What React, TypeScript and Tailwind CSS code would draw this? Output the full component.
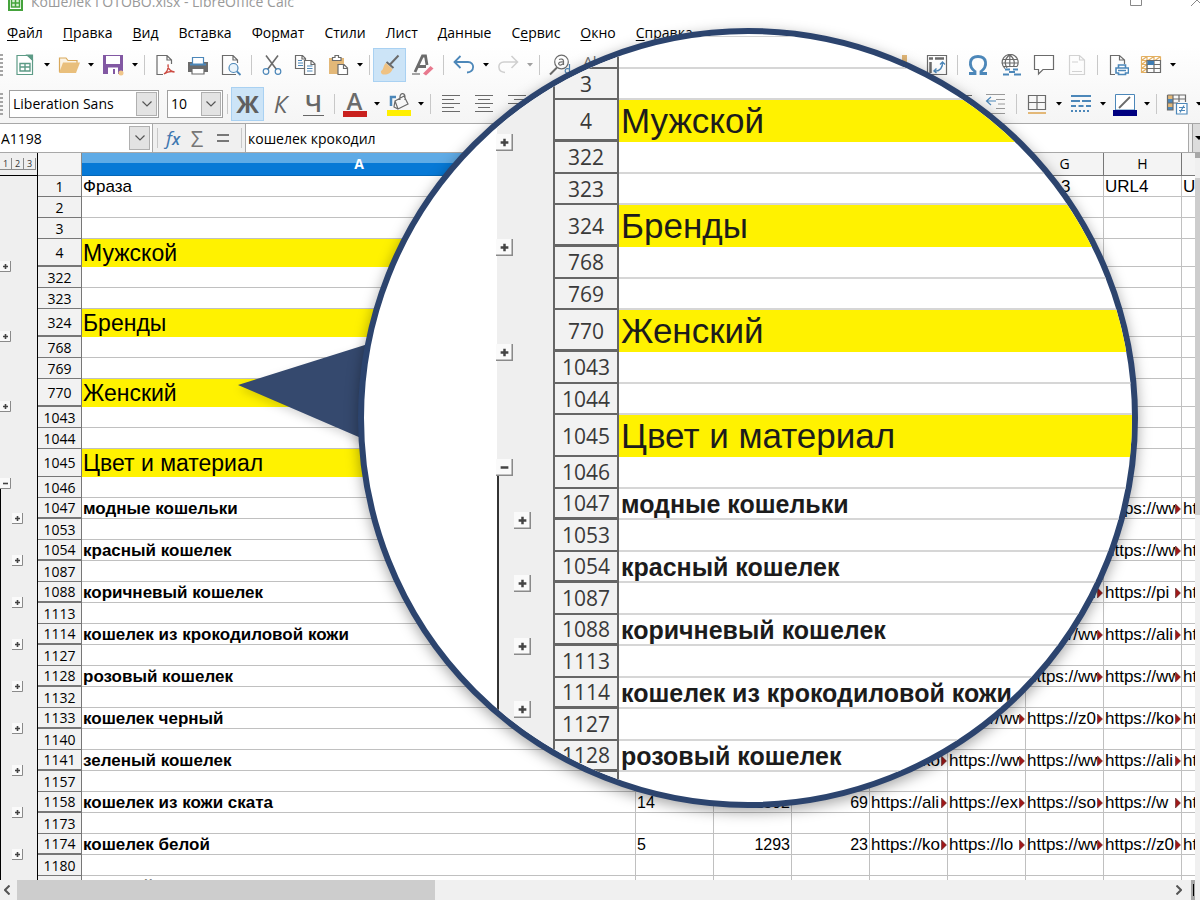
import type { ReactNode } from "react";

interface Row {
    n: string;
    title?: string;
    kind?: "group" | "bold" | "plain";
    outline?: "plus1" | "plus2" | "minus";
    thick?: boolean;
    inner?: boolean;
    cells?: string[];
}

const rows: Row[] = [
    { n: "1", title: "Фраза", kind: "plain", cells: ["", "", "", "URL1", "URL2", "URL3", "URL4", "URL5"] },
    { n: "2" },
    { n: "3" },
    { n: "4", title: "Мужской", kind: "group", thick: true },
    { n: "322", outline: "plus1" },
    { n: "323" },
    { n: "324", title: "Бренды", kind: "group", thick: true },
    { n: "768", outline: "plus1" },
    { n: "769" },
    { n: "770", title: "Женский", kind: "group", thick: true },
    { n: "1043", outline: "plus1" },
    { n: "1044" },
    { n: "1045", title: "Цвет и материал", kind: "group" },
    { n: "1046", outline: "minus" },
    { n: "1047", title: "модные кошельки", kind: "bold", thick: true, inner: true, cells: ["", "", "", "", "", "", "https://ww", "https://"] },
    { n: "1053", outline: "plus2", inner: true },
    { n: "1054", title: "красный кошелек", kind: "bold", thick: true, inner: true, cells: ["", "", "", "", "", "", "https://ww", "https://"] },
    { n: "1087", outline: "plus2", inner: true },
    { n: "1088", title: "коричневый кошелек", kind: "bold", thick: true, inner: true, cells: ["", "", "", "", "", "https://ww", "https://pi", "https://"] },
    { n: "1113", outline: "plus2", inner: true },
    { n: "1114", title: "кошелек из крокодиловой кожи", kind: "bold", thick: true, inner: true, cells: ["", "", "", "", "", "https://ww", "https://ali", "https://"] },
    { n: "1127", outline: "plus2", inner: true },
    { n: "1128", title: "розовый кошелек", kind: "bold", thick: true, inner: true, cells: ["", "", "", "", "", "https://ww", "https://ww", "https://"] },
    { n: "1132", outline: "plus2", inner: true },
    { n: "1133", title: "кошелек черный", kind: "bold", thick: true, inner: true, cells: ["", "", "", "", "https://ww", "https://z0", "https://ko", "https://"] },
    { n: "1140", outline: "plus2", inner: true },
    { n: "1141", title: "зеленый кошелек", kind: "bold", thick: true, inner: true, cells: ["", "", "", "https://ko", "https://ww", "https://ww", "https://ali", "https://"] },
    { n: "1157", outline: "plus2", inner: true },
    { n: "1158", title: "кошелек из кожи ската", kind: "bold", thick: true, inner: true, cells: ["14", "1392", "69", "https://ali", "https://ex", "https://so", "https://w", "https://"] },
    { n: "1173", outline: "plus2", inner: true },
    { n: "1174", title: "кошелек белой", kind: "bold", thick: true, inner: true, cells: ["5", "1293", "23", "https://ko", "https://lo", "https://ww", "https://z0", "https://"] },
    { n: "1180", outline: "plus2", inner: true },
    { n: "1181", title: "женский кошелек", kind: "bold", inner: true },
];

const columns = ["B", "C", "D", "E", "F", "G", "H", "I"];

// [before, underlined letter, after]
const menu = [
    ["", "Ф", "айл"],
    ["", "П", "равка"],
    ["", "В", "ид"],
    ["Вст", "а", "вка"],
    ["Фо", "р", "мат"],
    ["Стили", "", ""],
    ["Лист", "", ""],
    ["", "Д", "анные"],
    ["С", "е", "рвис"],
    ["", "О", "кно"],
    ["", "С", "правка"],
];

function Svg({ children }: { children: ReactNode }) {
    return (
        <svg width="22" height="22" viewBox="0 0 22 22" fill="none" stroke="#6b6b6b" strokeWidth="1.2">
            {children}
        </svg>
    );
}

function Tool({ label, active, children }: { label: string; active?: boolean; children: ReactNode }) {
    return (
        <button
            aria-label={label}
            className={`flex h-[34px] w-[33px] shrink-0 items-center justify-center ${active ? "border border-[#a9d1f2] bg-[#cce4f7]" : ""}`}
        >
            {children}
        </button>
    );
}

function Arrow({ muted }: { muted?: boolean }) {
    return (
        <button aria-label="Ещё" className="flex h-8 w-[11px] shrink-0 items-center justify-center">
            <svg width="6" height="4" viewBox="0 0 6 4">
                <path d="M0 0H6L3 3.5Z" fill={muted ? "#a0a0a0" : "#000"} />
            </svg>
        </button>
    );
}

function Sep() {
    return (
        <div className="flex h-5 w-2 shrink-0 justify-center">
            <div className="w-px bg-[#c8c8c8]" />
        </div>
    );
}

function Grip() {
    return (
        <div className="flex w-2 shrink-0 flex-col gap-0.5">
            {[0, 1, 2, 3, 4, 5].map((i) => (
                <div key={i} className="h-0.5 w-[3px] bg-[#a5a5a5]" />
            ))}
        </div>
    );
}

function Chevron() {
    return (
        <svg width="10" height="6" viewBox="0 0 10 6" fill="none" stroke="#555" strokeWidth="1.2">
            <path d="M0.5 0.5L5 5L9.5 0.5" />
        </svg>
    );
}

function Lines({ widths, align }: { widths: number[]; align: "left" | "center" | "right" }) {
    return (
        <Svg>
            {widths.map((w, i) => {
                const start = align === "left" ? 2 : align === "center" ? 11 - w / 2 : 20 - w;
                return <path key={i} d={`M${start} ${2.5 + i * 4}h${w}`} strokeWidth="1" />;
            })}
        </Svg>
    );
}

function TitleBar() {
    return (
        <header className="flex h-[19px] shrink-0 items-start justify-between overflow-hidden">
            <div className="-mt-2 flex items-center gap-2 pl-2">
                <svg width="15" height="19" viewBox="0 0 15 19">
                    <path d="M1 1H14V18H1Z" fill="#fff" stroke="#45a33c" strokeWidth="2" />
                    <path d="M3.5 7H11.5V15H3.5ZM3.5 11H11.5M7.5 7V15" fill="#d9f0d4" stroke="#45a33c" strokeWidth="1.5" />
                </svg>
                <h1 className="text-sm leading-[19px] text-[#999]">Кошелек ГОТОВО.xlsx - LibreOffice Calc</h1>
            </div>
            <div className="-mt-1.5 -mr-1 flex gap-12">
                <button aria-label="Развернуть">
                    <svg width="12" height="12" viewBox="0 0 12 12" fill="none" stroke="#888">
                        <path d="M0.5 0.5h11v11h-11z" />
                    </svg>
                </button>
                <button aria-label="Закрыть">
                    <svg width="14" height="12" viewBox="0 0 14 12" fill="none" stroke="#888">
                        <path d="M1 0L13 12M13 0L1 12" />
                    </svg>
                </button>
            </div>
        </header>
    );
}

function StandardBar() {
    return (
        <div className="flex h-9 shrink-0 items-center overflow-hidden">
            <Grip />
            <Tool label="Создать">
                <Svg>
                    <path d="M3 1.5H14L18.5 6V20.5H3Z" fill="#fff" stroke="#5d9b86" />
                    <path d="M13 1H18.5V6Z" fill="#5d9b86" stroke="#5d9b86" />
                    <path d="M6 9.5H16V17H6ZM6 13H16M11 9.5V17" stroke="#5d9b86" strokeWidth="1.4" />
                </Svg>
            </Tool>
            <Arrow />
            <Tool label="Открыть">
                <Svg>
                    <path d="M1.5 18V4H8L10 6.500H19V9" fill="#fbf3e4" stroke="#d9a95c" />
                    <path d="M1 19L5 8.500H22L18 19Z" fill="#e9bf7c" stroke="none" />
                </Svg>
            </Tool>
            <Arrow />
            <Tool label="Сохранить">
                <Svg>
                    <path d="M1 1H21V20H1Z" fill="#8258a3" stroke="none" />
                    <path d="M4 2H18V10H4Z" fill="#fff" stroke="none" />
                    <path d="M6 13.500H16V20H6Z" fill="#fff" stroke="none" />
                    <path d="M11 15H13V20H11Z" fill="#8258a3" stroke="none" />
                    <circle cx="19" cy="19" r="2.500" fill="#f0c68a" stroke="none" />
                </Svg>
            </Tool>
            <Arrow />
            <Sep />
            <Tool label="Экспорт в PDF">
                <Svg>
                    <path d="M9 20.500H3V1.500H13L17.500 6V10M13 1.500V6H17.500" />
                    <path d="M10 20C14 17 14.500 13 14 10.500C13.500 14 16 17.500 20.500 18C17 17 13 18 10 20Z" stroke="#cc4b42" strokeWidth="1.4" />
                </Svg>
            </Tool>
            <Tool label="Печать">
                <Svg>
                    <path d="M1 8H21V18H1Z" fill="#6b6b6b" stroke="none" />
                    <path d="M5.500 3.500H16.500V10.500H5.500Z" fill="#fff" stroke="#4c87b9" />
                    <path d="M3 10.500H19" stroke="#4c87b9" strokeWidth="2" />
                    <path d="M5 14.500H17V20H5Z" fill="#fff" stroke="#6b6b6b" />
                </Svg>
            </Tool>
            <Tool label="Предпросмотр печати">
                <Svg>
                    <path d="M16 20.500H2.500V1.500H13L17.500 6V9M13 1.500V6H17.500" />
                    <circle cx="13.500" cy="14" r="4.500" fill="#eaf4fb" stroke="#4c87b9" />
                    <path d="M17 17.500L20.500 21" stroke="#4c87b9" strokeWidth="1.800" />
                </Svg>
            </Tool>
            <Sep />
            <Tool label="Вырезать">
                <Svg>
                    <path d="M5 1.500L15.500 15.500M17 1.500L6.500 15.500" strokeWidth="1.600" />
                    <circle cx="5" cy="17.500" r="2.800" stroke="#4c87b9" />
                    <circle cx="17" cy="17.500" r="2.800" stroke="#4c87b9" />
                </Svg>
            </Tool>
            <Tool label="Копировать">
                <Svg>
                    <path d="M11 14.500H1.500V1.500H8.500L11.500 4.500V7M8 1.500V5H11.500" />
                    <path d="M4 6.500H8M4 9H9M4 11.500H9" stroke="#4c87b9" />
                    <path d="M10.500 6.500H17.500L21 10V20.500H10.500ZM17 6.500V10.500H21" fill="#fff" />
                    <path d="M13 12H18.500M13 14.500H18.500M13 17H18.500" stroke="#4c87b9" />
                </Svg>
            </Tool>
            <Tool label="Вставить">
                <Svg>
                    <path d="M2 4H17V20H2Z" fill="#e3b878" stroke="none" />
                    <path d="M5.500 6.500V3.500H8V1.500H11.500V3.500H14V6.500Z" fill="#fff" />
                    <path d="M11 10.500H17L20.500 14V20.500H11ZM16.500 10.500V14.500H20.500" fill="#fff" />
                </Svg>
            </Tool>
            <Arrow />
            <Sep />
            <Tool label="Клонировать форматирование" active>
                <Svg>
                    <path d="M19.500 1.500L11 10.500M7.500 8L14.500 14" strokeWidth="2" />
                    <path d="M7 9L13.500 15C12 19.500 8.500 21 4 20.500C2.500 20 1.500 18.500 2 17C5 15.500 4 11 7 9Z" fill="#efc283" stroke="none" />
                </Svg>
            </Tool>
            <Tool label="Очистить форматирование">
                <Svg>
                    <path d="M3 18L10.500 2H13.500L15 11M6 12.500H14" strokeWidth="2.800" />
                    <path d="M0 20H8" />
                    <path d="M11 19.500L18.500 12L21.500 14.500L14 21.500Z" fill="#e8798e" stroke="none" />
                </Svg>
            </Tool>
            <Sep />
            <Tool label="Отменить">
                <Svg>
                    <path d="M7.500 2L1.500 8L7.500 14M2 8H15C22 8 22 18 14 18.500" stroke="#4c87b9" strokeWidth="1.800" />
                </Svg>
            </Tool>
            <Arrow />
            <Tool label="Вернуть">
                <Svg>
                    <path d="M14.500 2L20.500 8L14.500 14M20 8H7C0 8 0 18 8 18.500" stroke="#cfcfcf" strokeWidth="1.500" />
                </Svg>
            </Tool>
            <Arrow muted />
            <Sep />
            <Tool label="Найти и заменить">
                <Svg>
                    <circle cx="12.500" cy="8" r="6.800" />
                    <path d="M8 13.500L1 20.500" strokeWidth="2" />
                    <path d="M10 5.500C12 4.500 14.500 5 14.500 7V11M14.500 8C8.500 7 8.500 11.500 12 11L14.500 9.500" />
                    <path d="M20.500 10V20.500M20.500 15C15 12.500 14.500 21 20.500 19" stroke="#4c87b9" />
                </Svg>
            </Tool>
            <Tool label="Орфография">
                <span className="pb-2 text-[15px] leading-4 text-[#6b6b6b]">Ab</span>
            </Tool>
            <div className="w-[278px] shrink-0" />
            <Tool label="Диаграмма">
                <Svg>
                    <path d="M9 1H14V20H9Z" fill="#e3b878" stroke="none" />
                    <path d="M2 12H7V20H2Z" fill="#4c87b9" stroke="none" />
                </Svg>
            </Tool>
            <Tool label="Сводная таблица">
                <Svg>
                    <path d="M1.500 1.500H20.500V20.500H1.500Z" />
                    <path d="M3 4.500H7M9 4.500H18M4.500 8V19" strokeWidth="2.500" />
                    <path d="M8 17C14 18 17 13 16.500 8M14 10.500L16.500 8L19 10.500M10.500 14.500L8 17L10.500 19" stroke="#4c87b9" strokeWidth="1.400" />
                </Svg>
            </Tool>
            <Sep />
            <Tool label="Специальные символы">
                <Svg>
                    <path d="M2 19.500H8V17.500C1 12 2 2.500 11 2.500S21 12 14 17.500V19.500H20" stroke="#4c87b9" strokeWidth="2.800" />
                </Svg>
            </Tool>
            <Tool label="Гиперссылка">
                <Svg>
                    <path d="M5 14.500A8 8 0 1 1 17 12.500M2.500 5.500H17M1.500 9H18M3 12.500H17M9.500 1C4.500 5 4.500 10 7 14M10 1C14.500 5 15 9 13.500 12.500M9.800 1V13" />
                    <path d="M5 15.500H10M13 15.500H18M9 18H15M3 20.500H9M14 20.500H21" stroke="#4c87b9" strokeWidth="2" />
                </Svg>
            </Tool>
            <Tool label="Комментарий">
                <Svg>
                    <path d="M1.500 1.500H20.500V15.500H10L5.500 20V15.500H1.500Z" fill="#fff" />
                </Svg>
            </Tool>
            <Tool label="Колонтитулы">
                <Svg>
                    <path d="M3.500 1.500H13.500L18.500 6V20.500H3.500ZM13.500 1.500V6H18.500M6 8H12M6 17.500H16" stroke="#d2d2d2" />
                </Svg>
            </Tool>
            <Sep />
            <Tool label="Область печати">
                <Svg>
                    <path d="M8 20.500H3.500V1.500H12.500L17.500 6V10M12.500 1.500V6H17.500" />
                    <path d="M11.500 11H18.500V14H21.500V19H18.500V20.500H11.500V19H9V14H11.500ZM11 16.500H19M11.500 14H18.500" fill="#fff" stroke="#4c87b9" strokeWidth="1.600" />
                </Svg>
            </Tool>
            <Tool label="Закрепить">
                <Svg>
                    <path d="M1.500 2.500H20.500M1.500 6.500H20.500M1.500 2.500V18.500H7M1.500 10.500H7M1.500 14.500H7M7 2.500V18.500M14 2.500V6.500M20.500 2.500V6.500M1.500 6.500L7 2.500M8 6.500L14 2.500M15 6.500L20.500 2.500M1.500 10.500L7 6.500M1.500 14.500L7 10.500M1.500 18.500L7 14.500" stroke="#e3b062" />
                    <path d="M7 6.500H20.500V18.500H7ZM7 10.500H20.500M7 14.500H20.500M14 6.500V18.500" />
                    <path d="M7.500 7H14V11H7.500Z" fill="#3d7cb4" stroke="none" />
                </Svg>
            </Tool>
            <Arrow />
        </div>
    );
}

function FormatBar() {
    return (
        <div className="flex h-10 shrink-0 items-center overflow-hidden pt-px">
            <Grip />
            <div className="relative ml-px shrink-0">
                <select aria-label="Шрифт" className="h-7 w-[150px] appearance-none border border-[#a0a0a0] bg-white pl-[3px] text-sm">
                    <option>Liberation Sans</option>
                </select>
                <div className="pointer-events-none absolute top-0.5 right-0.5 flex h-6 w-[21px] items-center justify-center border border-[#b0b0b0] bg-[#e3e3e3]">
                    <Chevron />
                </div>
            </div>
            <div className="relative ml-2 shrink-0">
                <select aria-label="Размер шрифта" className="h-7 w-14 appearance-none border border-[#a0a0a0] bg-white pl-[3px] text-sm">
                    <option>10</option>
                </select>
                <div className="pointer-events-none absolute top-0.5 right-0.5 flex h-6 w-5 items-center justify-center border border-[#b0b0b0] bg-[#e3e3e3]">
                    <Chevron />
                </div>
            </div>
            <Sep />
            <Tool label="Полужирный" active>
                <span className="text-[24px] leading-8 font-bold text-[#5f5f5f]">Ж</span>
            </Tool>
            <Tool label="Курсив">
                <span className="text-[24px] leading-8 text-[#666] italic">К</span>
            </Tool>
            <Tool label="Подчёркнутый">
                <span className="border-b border-[#666] px-0.5 text-[24px] leading-6 font-semibold text-[#666]">Ч</span>
            </Tool>
            <Sep />
            <Tool label="Цвет символов">
                <span className="w-6 border-b-[6px] border-[#c9211e] text-center text-[24px] leading-5 font-semibold text-[#6b6b6b]">A</span>
            </Tool>
            <Arrow />
            <Tool label="Цвет фона">
                <svg width="24" height="24" viewBox="0 0 24 24" fill="none" stroke="#6b6b6b" strokeWidth="1.2">
                    <path d="M4 14V5H9" stroke="#4c87b9" strokeWidth="2.500" />
                    <path d="M8 9L17 4L21 12L11 17ZM13 8C12 0 18 0 18 5V8M8 9L7 15L11 17" />
                    <path d="M0 18H24V24H0Z" fill="#ffef00" stroke="none" />
                </svg>
            </Tool>
            <Arrow />
            <Sep />
            <Tool label="По левому краю"><Lines widths={[18, 12, 18, 12, 18]} align="left" /></Tool>
            <Tool label="По центру"><Lines widths={[18, 12, 18, 12, 18]} align="center" /></Tool>
            <Tool label="По правому краю"><Lines widths={[18, 12, 18, 12, 18]} align="right" /></Tool>
            <div className="w-[413px] shrink-0" />
            <Tool label="Увеличить отступ"><Lines widths={[18, 10, 10, 10, 18]} align="right" /></Tool>
            <Tool label="Уменьшить отступ">
                <Svg>
                    <path d="M1 1.500H20M11 6.500H20M13 11H20M11 15.500H20M1 20.500H20" stroke="#999" />
                    <path d="M6 4L1.500 8L6 12M2 8H11" stroke="#4c87b9" />
                </Svg>
            </Tool>
            <Sep />
            <Tool label="Обрамление">
                <Svg>
                    <path d="M2.500 2.500H19.500V16.500H2.500ZM11 2.500V16.500M2.500 9.500H19.500" />
                    <path d="M2 20H20" stroke="#e3b878" strokeWidth="2" />
                </Svg>
            </Tool>
            <Arrow />
            <Tool label="Стиль обрамления">
                <Svg>
                    <path d="M1 3H21" stroke="#4c87b9" strokeWidth="2" />
                    <path d="M1 8H21" stroke="#4c87b9" strokeWidth="2" strokeDasharray="9 2" />
                    <path d="M1 13H21" stroke="#4c87b9" strokeWidth="2" strokeDasharray="5 2.500" />
                    <path d="M1 18H21" stroke="#4c87b9" strokeWidth="2" strokeDasharray="2 2" />
                </Svg>
            </Tool>
            <Arrow />
            <Tool label="Цвет обрамления">
                <svg width="24" height="24" viewBox="0 0 24 24" fill="none">
                    <path d="M2.500 2.500H21.500V18H2.500Z" fill="#fff" stroke="#4c87b9" />
                    <path d="M6 16L17 5" stroke="#6b6b6b" strokeWidth="1.800" />
                    <path d="M0 18H24V24H0Z" fill="#000080" />
                </svg>
            </Tool>
            <Arrow />
            <Sep />
            <Tool label="Условное форматирование">
                <Svg>
                    <path d="M1 2H7V6H1ZM1 10H7V14H1Z" fill="#e3b878" stroke="none" />
                    <path d="M1 6H7V10H1ZM1 14H7V17H1Z" fill="#4c87b9" stroke="none" />
                    <path d="M1.500 2H19.500V9M7 2V17H1.500V2M7 6H19M7 10H12M1 10H7M13 2V9" />
                    <path d="M10.500 10.500H21V21H10.500Z" fill="#fff" stroke="#4c87b9" />
                    <path d="M13 14.500H19M13 17.500H19M18 12.500L14 19.500" stroke="#4c87b9" />
                </Svg>
            </Tool>
            <Arrow />
        </div>
    );
}

function FormulaBar() {
    return (
        <div className="flex h-[30px] shrink-0 items-stretch border-y border-[#a8a8a8] bg-[#f0f0f0]">
            <div className="flex w-[153px] shrink-0 items-center border-r border-[#a8a8a8] bg-white pr-0.5">
                <input aria-label="Поле имени" defaultValue="A1198" className="w-0 flex-1 pt-px pl-px text-sm outline-none" />
                <button aria-label="Список имён" className="flex h-6 w-[21px] items-center justify-center border border-[#b0b0b0] bg-[#e3e3e3]">
                    <Chevron />
                </button>
            </div>
            <div className="flex shrink-0 items-center">
                <Sep />
                <button aria-label="Мастер функций" className="w-6 text-[19px] leading-6 text-[#4178b0] italic">
                    f<span className="text-[16px] font-semibold">x</span>
                </button>
                <button aria-label="Сумма" className="w-6 text-[22px] leading-6 text-[#777]">Σ</button>
                <button aria-label="Формула" className="flex w-7 flex-col items-center gap-1">
                    <span className="h-0.5 w-3 bg-[#777]" />
                    <span className="h-0.5 w-3 bg-[#777]" />
                </button>
                <Sep />
            </div>
            <input
                aria-label="Строка ввода"
                defaultValue="кошелек крокодил"
                className="min-w-0 flex-1 border-x border-[#a8a8a8] bg-white pt-px pl-0.5 text-sm outline-none"
            />
            <button aria-label="Развернуть строку ввода" className="ml-[3px] flex w-2 items-center overflow-hidden border-l border-[#a0a0a0] bg-[#dcdcdc]">
                <svg width="8" height="4" viewBox="0 0 8 4" className="ml-0.5 shrink-0">
                    <path d="M0 0H8L4 4Z" fill="#000" />
                </svg>
            </button>
        </div>
    );
}

function Overflow() {
    return (
        <svg width="6" height="10" viewBox="0 0 6 10" className="shrink-0">
            <path d="M0.500 0L5.500 5L0.500 10Z" fill="#a01818" stroke="#401010" strokeWidth="0.500" />
        </svg>
    );
}

function Cell({ value, index }: { value: string; index: number }) {
    if (value.startsWith("https")) {
        return (
            <div className="flex items-center">
                <span className="flex-1 overflow-hidden whitespace-nowrap">{value}</span>
                <Overflow />
            </div>
        );
    }
    if (index < 3) {
        return <div className={`text-[16px] ${index === 0 ? "" : "pr-px text-right"}`}>{value}</div>;
    }
    return <div>{value}</div>;
}

function OutlineButton({ kind, large }: { kind: string; large?: boolean }) {
    const sign = kind === "minus" ? "M3 5.500H8" : "M3 5.500H8M5.500 3V8";
    const size = large ? 17 : 11;
    return (
        <svg width={size} height={size} viewBox="0 0 11 11" fill="none">
            <path d="M0 0H11V11H0Z" fill="#fafafa" />
            <path d="M0 10.500H10.500V0" stroke="#8a8a8a" />
            <path d={sign} stroke="#444" strokeWidth="1.600" />
        </svg>
    );
}

function Sheet() {
    return (
        <div className="flex min-h-0 flex-1">
            <div className="flex-1 overflow-hidden">
                <table className="w-[1260px] table-fixed border-separate border-spacing-0 text-[17px]">
                    <colgroup>
                        <col className="w-[38px]" />
                        <col className="w-11" />
                        <col className="w-[554px]" />
                        {columns.map((c) => (
                            <col key={c} className="w-[78px]" />
                        ))}
                    </colgroup>
                    <thead>
                        <tr className="h-[23px] bg-[#f4f4f4] font-[Open_Sans,sans-serif] text-sm leading-5">
                            <td className="border-r border-b border-black bg-[#efefef] p-0">
                                <div className="flex">
                                    {["1", "2", "3"].map((l) => (
                                        <button key={l} className="h-3 w-3 border-r border-b border-[#8a8a8a] text-[9px] leading-[11px] text-[#333]">{l}</button>
                                    ))}
                                </div>
                            </td>
                            <th className="border-r border-b border-[#8a8a8a] p-0" />
                            <th className="border-b border-[#0566b5] bg-linear-to-b from-[#5fabe6] from-45% to-[#0779d6] to-45% p-0 font-bold text-white">A</th>
                            {columns.map((c) => (
                                <th key={c} className="border-r border-b border-[#777] p-0 font-normal">{c}</th>
                            ))}
                        </tr>
                    </thead>
                    <tbody>
                        {rows.map((row) => (
                            <tr key={row.n} className={row.kind === "group" ? "h-7" : "h-[21px]"}>
                                <td className={`relative border-r border-black bg-[#efefef] p-0 ${row.inner ? "border-l" : ""}`}>
                                    {row.outline === "minus" && <div className="absolute top-3 bottom-0 left-0 w-px bg-black" />}
                                    {row.outline && (
                                        <button
                                            aria-label={row.outline === "minus" ? "Свернуть" : "Развернуть"}
                                            className={`absolute z-10 ${row.outline === "minus" ? "top-px" : "-top-1.5"} ${row.outline === "plus2" ? "left-[11px]" : "left-0"}`}
                                        >
                                            <OutlineButton kind={row.outline} />
                                        </button>
                                    )}
                                </td>
                                <th className={`border-r border-[#777] bg-[#f2f2f2] p-0 font-[Open_Sans,sans-serif] text-sm leading-[19px] font-normal ${row.thick ? "border-b-2" : "border-b"}`}>
                                    {row.n}
                                </th>
                                {row.kind === "group" ? (
                                    <td className="border-r border-[#c0c0c0] bg-[#fff200] p-0 pl-px text-[23px] leading-[27px]">{row.title}</td>
                                ) : (
                                    <td className={`border-r border-b border-[#c0c0c0] p-0 pt-0.5 pl-px leading-[18px] ${row.kind === "bold" ? "font-bold" : ""}`}>{row.title}</td>
                                )}
                                {columns.map((c, i) => (
                                    <td key={c} className="border-r border-b border-[#c0c0c0] p-0 pt-0.5 pl-px leading-[18px]">
                                        {row.cells && <Cell value={row.cells[i]} index={i} />}
                                    </td>
                                ))}
                            </tr>
                        ))}
                    </tbody>
                </table>
            </div>
            <div className="w-[5px] shrink-0 border-t-[5px] border-[#a8a8a8] bg-[#f0f0f0] pt-5">
                <div className="h-[337px] bg-[#cdcdcd]" />
            </div>
        </div>
    );
}

function Lens() {
    const lensRows = rows.slice(1, 24);
    return (
        <div className="absolute top-7 left-[358px] flex h-[780px] w-[780px] overflow-hidden rounded-full border-[6px] border-[#2c446e] bg-white pt-0.5 pl-[133px] shadow-[0_4px_14px_rgba(0,0,0,0.35)]">
            <table className="w-full table-fixed border-separate border-spacing-0 self-start border-t border-[#d4d4d4] text-[#1c1c1c]">
                <colgroup>
                    <col className="w-14" />
                    <col className="w-[66px]" />
                    <col />
                </colgroup>
                <tbody>
                    {lensRows.map((row) => {
                        const short = row.kind === "bold" || row.n === "3" || row.n === "323" || row.n === "769" || row.n === "1044";
                        return (
                            <tr key={row.n} className={row.kind === "group" ? "h-[42px]" : short ? "h-[31px]" : "h-8"}>
                                <td className={`relative bg-[#efefef] p-0 ${row.inner ? "border-l-2 border-[#333]" : ""}`}>
                                    {row.outline === "minus" && <div className="absolute top-4 bottom-0 left-0 w-0.5 bg-[#333]" />}
                                    {row.outline && (
                                        <span className={`absolute z-10 ${row.outline === "minus" ? "top-0.5" : "-top-2"} ${row.outline === "plus2" ? "left-[15px]" : "-left-px"}`}>
                                            <OutlineButton kind={row.outline} large />
                                        </span>
                                    )}
                                </td>
                                <th className={`border-r-2 border-l-2 border-[#666] bg-[#f2f2f2] p-0 font-[Open_Sans,sans-serif] text-[21px] leading-7 font-normal text-[#3a3a3a] ${row.kind === "group" ? "pt-0.5" : ""} ${row.thick ? "border-b-[3px]" : "border-b-2"}`}>
                                    {row.n}
                                </th>
                                {row.kind === "group" ? (
                                    <td className="bg-[#fff200] p-0 pl-0.5 text-[35px] leading-10 whitespace-nowrap">{row.title}</td>
                                ) : (
                                    <td className="border-b-2 border-[#d6d6d6] p-0 pl-0.5 text-[25px] leading-7 font-bold whitespace-nowrap">{row.title}</td>
                                )}
                            </tr>
                        );
                    })}
                </tbody>
            </table>
        </div>
    );
}

export default function App() {
    return (
        <div className="relative flex h-screen flex-col overflow-hidden bg-white font-[Liberation_Sans,sans-serif] text-black">
            <div className="shrink-0 bg-linear-to-b from-white from-30% to-[#f1f1f1] font-[Open_Sans,sans-serif]">
                <TitleBar />
                <nav className="flex h-7 items-center gap-5 pl-[7px] text-sm">
                    {menu.map(([before, key, after]) => (
                        <button key={before + key + after} className="shrink-0">
                            {before}
                            <span className="underline underline-offset-2">{key}</span>
                            {after}
                        </button>
                    ))}
                </nav>
                <StandardBar />
                <FormatBar />
                <FormulaBar />
            </div>
            <Sheet />
            <div className="flex h-5 shrink-0 items-center bg-[#f0f0f0]">
                <button aria-label="Влево" className="flex w-[17px] justify-center pr-1">
                    <svg width="6" height="10" viewBox="0 0 6 10" fill="none" stroke="#555" strokeWidth="2">
                        <path d="M5.500 0.500L1 5L5.500 9.500" />
                    </svg>
                </button>
                <div className="h-full w-[418px] bg-[#cdcdcd]" />
                <button aria-label="Вправо" className="mr-1 ml-auto flex w-4 justify-center">
                    <svg width="6" height="10" viewBox="0 0 6 10" fill="none" stroke="#555" strokeWidth="2">
                        <path d="M0.500 0.500L5 5L0.500 9.500" />
                    </svg>
                </button>
                <div className="mr-[5px] flex h-full w-1 items-center justify-center bg-[#a8a8a8]">
                    <div className="h-3 w-px bg-black" />
                </div>
            </div>
            <svg width="130" height="100" viewBox="0 0 130 100" className="absolute top-[343px] left-[238px] drop-shadow-lg">
                <path d="M0 42L130 1V98Z" fill="#35496e" />
            </svg>
            <Lens />
        </div>
    );
}
